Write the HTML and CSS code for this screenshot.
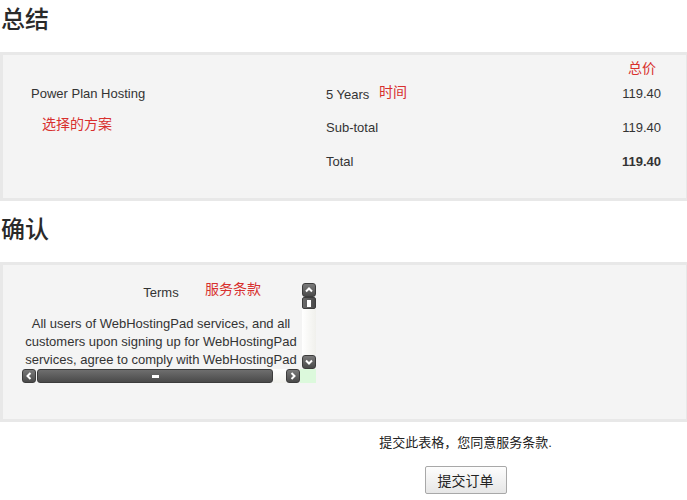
FILE: index.html
```html
<!DOCTYPE html>
<html lang="zh">
<head>
  <meta charset="UTF-8" />
  <title>总结</title>
  <link rel="stylesheet" href="styles.css">
</head>
<body>
  <h1 class="section-title first">总结</h1>
  <div class="panel summary">
    <div></div><div></div><div class="price-head note">总价</div>
    <div>Power Plan Hosting</div><div>5 Years <span class="note">时间</span></div><div class="num">119.40</div>
    <div><span class="note plan-note">选择的方案</span></div><div>Sub-total</div><div class="num">119.40</div>
    <div></div><div>Total</div><div class="num total">119.40</div>
  </div>

  <h1 class="section-title">确认</h1>
  <div class="panel terms-panel">
    <div class="scroller">
      <div class="scroll-view">
        <div class="terms-title">Terms</div>
        <p>All users of WebHostingPad services, and all customers upon signing up for WebHostingPad services, agree to comply with WebHostingPad</p>
      </div>
      <div class="vbar">
        <div class="sb-btn"><svg viewBox="0 0 10 10"><path d="M2 6.5 L5 3.5 L8 6.5" /></svg></div>
        <div class="v-thumb"><i></i></div>
        <div class="v-track"></div>
        <div class="sb-btn"><svg viewBox="0 0 10 10"><path d="M2 3.5 L5 6.5 L8 3.5" /></svg></div>
      </div>
      <div class="hbar">
        <div class="sb-btn"><svg viewBox="0 0 10 10"><path d="M6.5 2 L3.5 5 L6.5 8" /></svg></div>
        <div class="h-thumb"><i></i></div>
        <div class="h-track"></div>
        <div class="sb-btn"><svg viewBox="0 0 10 10"><path d="M3.5 2 L6.5 5 L3.5 8" /></svg></div>
      </div>
      <div class="corner"></div>
      <span class="note terms-note">服务条款</span>
    </div>
  </div>

  <div class="submit-area">
    <p>提交此表格，您同意服务条款.</p>
    <button>提交订单</button>
  </div>
</body>
</html>
```

FILE: styles.css
```css
body {
  margin: 0;
  font-family: "Liberation Sans", "Noto Sans CJK SC", sans-serif;
  font-size: 13px;
  color: #333;
  background: #fff;
}
.section-title {
  margin: 9px 0 16px;
  padding-left: 1px;
  font-family: "Noto Sans CJK SC", sans-serif;
  font-size: 24px;
  font-weight: 500;
  line-height: 36px;
  color: #2a2a2a;
}
.section-title.first {
  margin-top: 0;
}
.panel {
  background: #f4f4f4;
  border: 3px solid #e8e8e8;
  border-right-width: 1px;
}
.note {
  color: #d8302e;
  font-family: "Noto Sans CJK SC", sans-serif;
  font-size: 14px;
}
.summary {
  display: grid;
  grid-template-columns: 295px 1fr 44px;
  grid-template-rows: 18px 34px 34px 34px;
  padding: 3px 25px 20px 28px;
  align-items: center;
}
.price-head {
  text-align: center;
  line-height: 18px;
  padding-top: 4px;
}
.summary .num {
  text-align: right;
}
.summary .total {
  font-weight: bold;
}
.summary .note {
  margin-left: 6px;
  position: relative;
  top: -2px;
}
.summary .plan-note {
  margin-left: 11px;
  top: -4px;
}

.terms-panel {
  padding: 18px 0 36px 19px;
}
.scroller {
  position: relative;
  display: grid;
  grid-template-columns: 278px 16px;
  grid-template-rows: 86px 14px;
  width: 294px;
}
.scroll-view {
  overflow: hidden;
  text-align: center;
  font-size: 13px;
  line-height: 18px;
}
.terms-title {
  margin-top: 1px;
}
.scroll-view p {
  margin: 13px 0 0;
}
.terms-note {
  position: absolute;
  left: 183px;
  top: -5px;
}
.vbar {
  display: flex;
  flex-direction: column;
  width: 14px;
  margin-left: 2px;
}
.hbar {
  display: flex;
}
.sb-btn {
  width: 14px;
  height: 14px;
  flex: none;
  box-sizing: border-box;
  border-radius: 3px;
  background: linear-gradient(#7a7a7a, #4a4a4a);
  border: 1px solid #3c3c3c;
  display: flex;
  align-items: center;
  justify-content: center;
}
.sb-btn svg {
  width: 10px;
  height: 10px;
  fill: none;
  stroke: #fff;
  stroke-width: 2;
}
.v-thumb {
  height: 12px;
  flex: none;
  box-sizing: border-box;
  border-radius: 2px;
  background: linear-gradient(90deg, #6a6a6a, #4a4a4a);
  border: 1px solid #3c3c3c;
  display: flex;
  align-items: center;
  justify-content: center;
}
.v-thumb i {
  width: 4px;
  height: 7px;
  background: #fff;
}
.v-track {
  flex: 1;
  background: linear-gradient(90deg, #fff, #f0f0ec);
}
.h-thumb {
  width: 236px;
  flex: none;
  box-sizing: border-box;
  border-radius: 3px;
  background: linear-gradient(#6e6e6e, #4a4a4a);
  border: 1px solid #3c3c3c;
  display: flex;
  align-items: center;
  justify-content: center;
  margin-left: 1px;
}
.h-thumb i {
  width: 7px;
  height: 3px;
  background: #fff;
}
.h-track {
  flex: 1;
  background: linear-gradient(#fff, #f0f0ec);
}
.corner {
  background: #dcf9dc;
}

.submit-area {
  margin-left: 244px;
  text-align: center;
}
.submit-area p {
  margin: 12px 0 14px;
  line-height: 18px;
  font-size: 13px;
  color: #222;
}
.submit-area button {
  width: 82px;
  height: 28px;
  font-family: "Noto Sans CJK SC", sans-serif;
  font-size: 14px;
  color: #222;
  background: linear-gradient(#fdfdfd, #e6e6e6);
  border: 1px solid #a8a8a8;
  border-radius: 2px;
}
```
